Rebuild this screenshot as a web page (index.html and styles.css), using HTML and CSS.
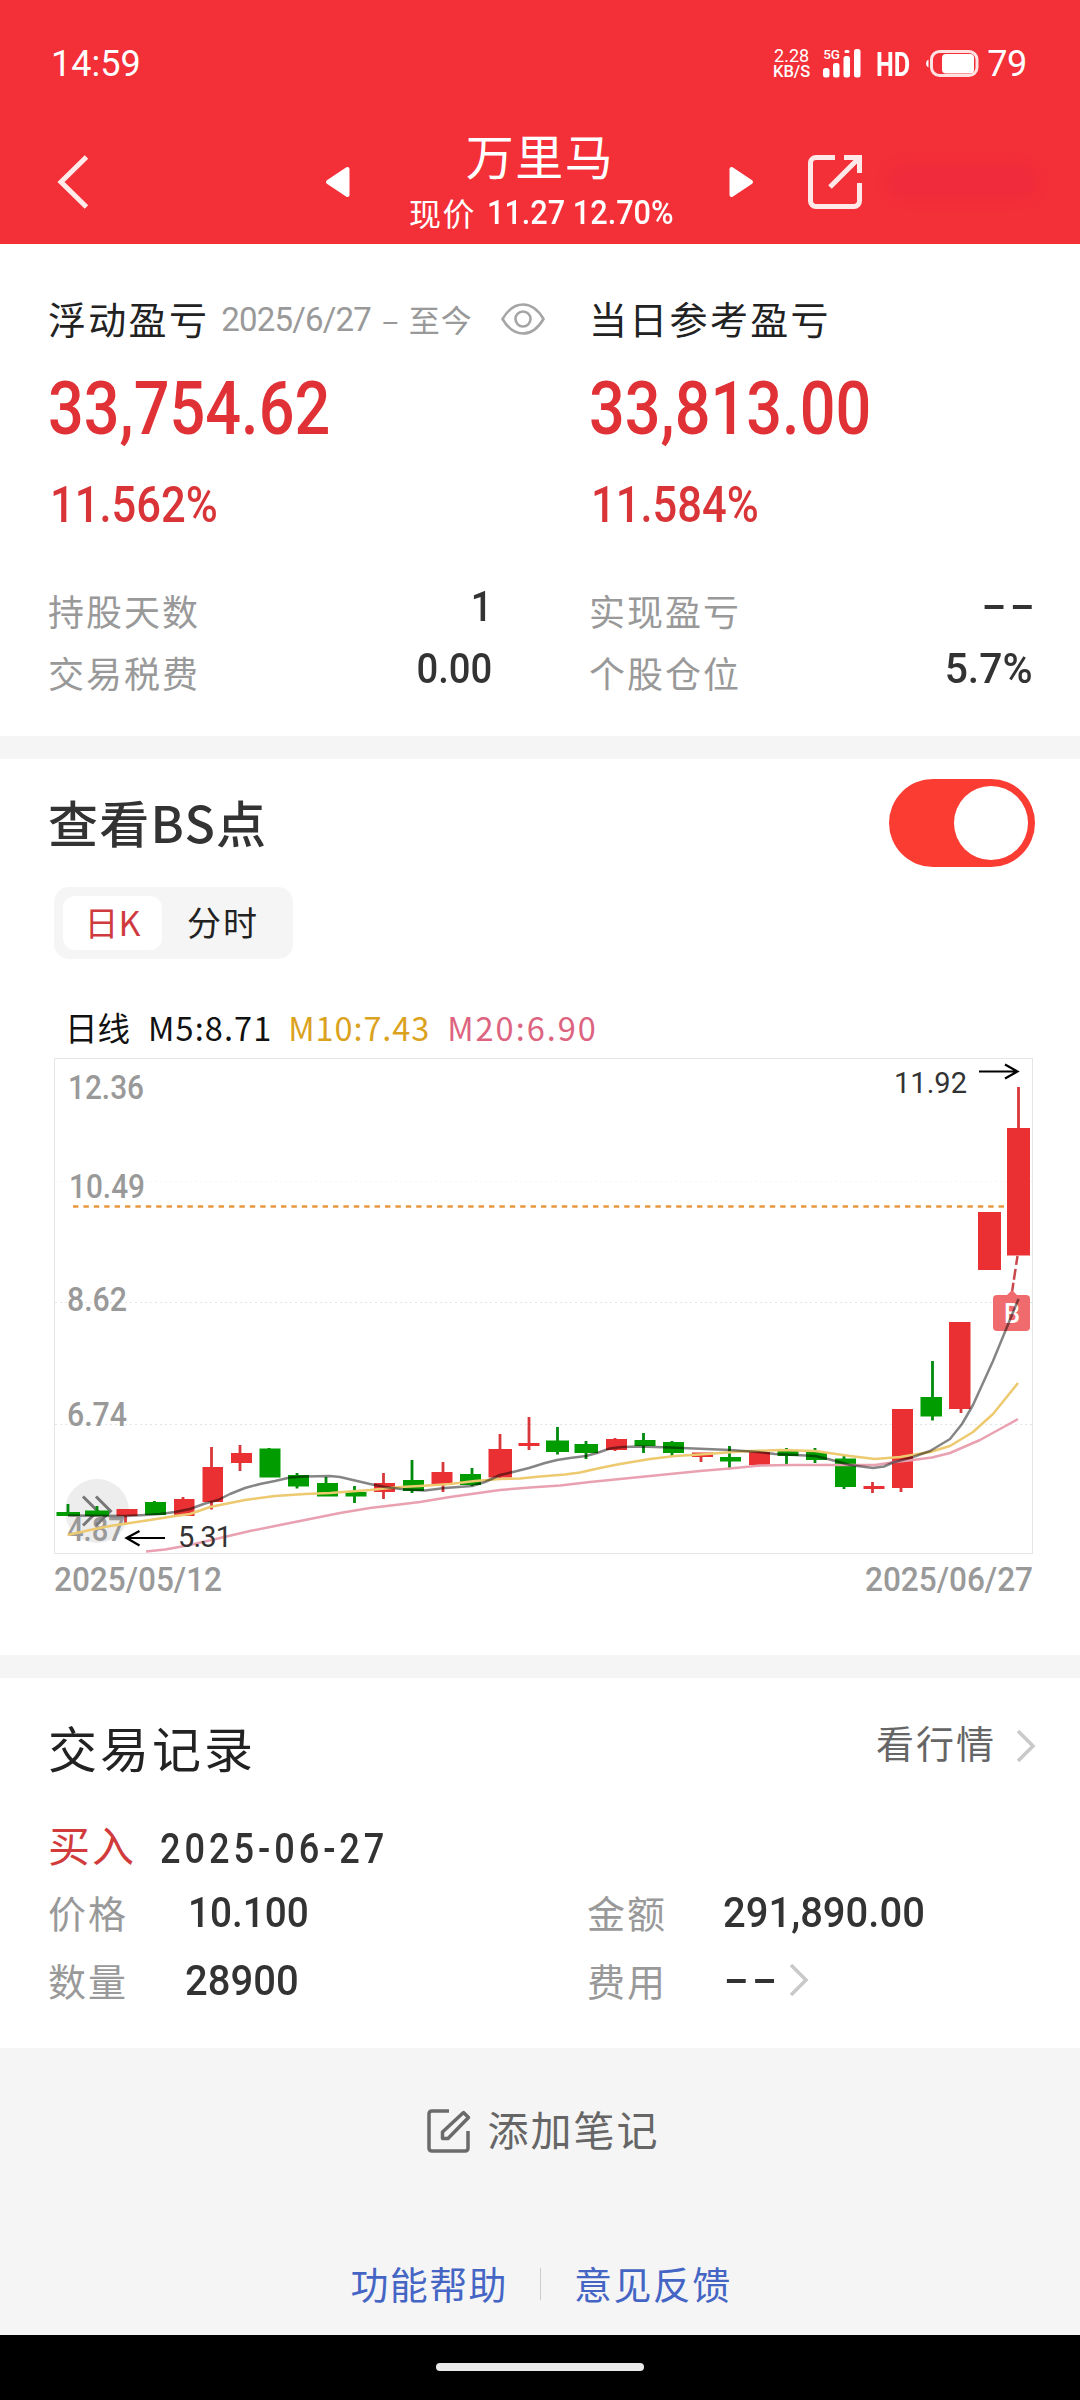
FILE: index.html
```html
<!DOCTYPE html>
<html lang="zh-CN">
<head>
<meta charset="utf-8">
<title>万里马</title>
<link rel="stylesheet" href="styles.css">
</head>
<body>
<header class="top">
  <div class="status">
    <span class="clock">14:59</span>
    <span class="speed"><span>2.28</span><span class="unit">KB/S</span></span>
    <span class="signal">
      <svg width="38" height="29" viewBox="0 0 38 29" fill="#fff"><rect y="19" width="6.5" height="9.5" rx="2.5"/><rect x="10" y="14" width="6.5" height="14.5" rx="2.5"/><rect x="20.500" y="7" width="6.500" height="21.500" rx="2.500"/><rect x="21.500" y="1" width="5" height="3" rx="1.500"/><rect x="31" width="6.500" height="28.500" rx="2.500"/></svg>
      <span class="gen">5G</span>
    </span>
    <span class="hd">HD</span>
    <svg class="battery" width="53" height="27" viewBox="0 0 53 27"><rect x="5.500" y="1.500" width="45.500" height="24" rx="8" fill="none" stroke="#ffe3e3" stroke-width="3"/><rect x="16" y="4" width="32" height="19.500" rx="4" fill="#fff"/><path d="M2.500 9.500v8Q0 16.500 0 13.500t2.500-4z" fill="#fff"/></svg>
    <span class="level">79</span>
  </div>
  <nav class="nav">
    <svg class="back" width="32" height="54" viewBox="0 0 32 54"><path d="M29.500 2 4 27l25.500 25" fill="none" stroke="#ffecea" stroke-width="5"/></svg>
    <svg class="prev" width="26" height="32" viewBox="0 0 26 32"><path d="M3 16 22.500 3v26z" fill="#fff" stroke="#fff" stroke-width="4" stroke-linejoin="round"/></svg>
    <div class="title">
      <h1>万里马</h1>
      <p><span>现价</span><span class="quote">11.27 12.70%</span></p>
    </div>
    <svg class="next" width="26" height="32" viewBox="0 0 26 32"><path d="M23 16 3.500 3v26z" fill="#fff" stroke="#fff" stroke-width="4" stroke-linejoin="round"/></svg>
    <svg class="share" width="56" height="56" viewBox="0 0 56 56" fill="none" stroke="#ffe9e8" stroke-width="5"><path d="M28 3.500H9A5.500 5.500 0 0 0 3.500 9v38A5.500 5.500 0 0 0 9 52.500h38a5.500 5.500 0 0 0 5.500-5.500V29M37 3.500h15.500V19M52 4 23 33"/></svg>
    <span class="smudge"></span>
  </nav>
</header>

<section class="summary">
  <div class="col">
    <div class="head"><span>浮动盈亏</span><span class="since">2025/6/27</span><span class="until">–</span><span class="until now">至今</span>
      <svg class="eye" width="44" height="32" viewBox="0 0 44 32" fill="none" stroke="#a5a5a5" stroke-width="2.600"><path d="M1.500 16Q10 1.500 22 1.500T42.500 16Q34 30.500 22 30.500T1.500 16z"/><circle cx="22" cy="16" r="7.500"/></svg>
    </div>
    <div class="big"><span class="din">33,754.62</span></div>
    <div class="pct"><span class="din">11.562%</span></div>
    <div class="row"><span>持股天数</span><b class="din">1</b></div>
    <div class="row"><span>交易税费</span><b class="din">0.00</b></div>
  </div>
  <div class="col right">
    <div class="head"><span>当日参考盈亏</span></div>
    <div class="big"><span class="din">33,813.00</span></div>
    <div class="pct"><span class="din">11.584%</span></div>
    <div class="row"><span>实现盈亏</span><b class="dash">--</b></div>
    <div class="row"><span>个股仓位</span><b class="din share-pct">5.7%</b></div>
  </div>
</section>

<section class="points">
  <div class="points-head"><h2>查看BS点</h2><span class="toggle"><i></i></span></div>
  <div class="tabs"><span class="tab active">日K</span><span class="tab">分时</span></div>
  <div class="legend"><span>日线</span><span class="m5">M5:8.71</span><span class="m10">M10:7.43</span><span class="m20">M20:6.90</span></div>
  <svg class="chart" width="1080" height="550" viewBox="0 1052 1080 550">
    <rect x="54.500" y="1058.500" width="978" height="495" fill="#fff" stroke="#e6e6e6"/>
    <path d="M55 1181.500H1032" stroke="#f5f5f5" stroke-dasharray="2 3"/>
    <path d="M55 1302.500H1032M55 1424.500H1032" stroke="#e4e4e4" stroke-dasharray="2 3"/>
    <path d="M73 1206.500H1008" stroke="#e8963f" stroke-width="2.500" stroke-dasharray="5.400 5"/>
    <circle cx="97" cy="1511" r="32" fill="#ededed"/>
    <g class="axis">
      <text x="68" y="1099" textLength="76" lengthAdjust="spacingAndGlyphs">12.36</text>
      <text x="69" y="1198" textLength="76" lengthAdjust="spacingAndGlyphs">10.49</text>
      <text x="67" y="1311" textLength="60" lengthAdjust="spacingAndGlyphs">8.62</text>
      <text x="67" y="1426" textLength="60" lengthAdjust="spacingAndGlyphs">6.74</text>
      <text x="67" y="1541" textLength="58" lengthAdjust="spacingAndGlyphs">4.87</text>
      <text x="54" y="1590.500" textLength="168" lengthAdjust="spacingAndGlyphs">2025/05/12</text>
      <text x="865" y="1590.500" textLength="168" lengthAdjust="spacingAndGlyphs">2025/06/27</text>
    </g>
    <g fill="none" stroke="#777" stroke-width="3"><path d="M83 1496.500 97.500 1511 83 1525.500M96 1496.500l14.500 14.500L96 1525.500"/></g>
    <g class="up">
      <path class="wick" d="M125.500 1510V1523M183 1497V1515M211.500 1447V1509.500M240 1445V1471M383.500 1473V1499M443 1462V1492M500 1434V1478M529 1417V1450M615 1438V1451M701 1453V1462M758 1450V1467M872.500 1482V1493M901 1410V1492M961 1323V1413M1018.500 1087V1254"/>
      <rect x="116.500" y="1509" width="21" height="7"/><rect x="174" y="1499" width="20.500" height="17"/><rect x="202.500" y="1467" width="20.500" height="35"/><rect x="231" y="1453" width="21" height="10"/><rect x="374" y="1483" width="21" height="9"/><rect x="431.500" y="1472" width="21" height="12.500"/><rect x="488.500" y="1449" width="23.500" height="28.500"/><rect x="518.500" y="1443" width="21" height="3"/><rect x="606" y="1439" width="21" height="11"/><rect x="692" y="1452.500" width="21" height="4.500"/><rect x="749" y="1452" width="21" height="13"/><rect x="863.500" y="1486" width="21" height="3"/><rect x="892" y="1409" width="21" height="79"/><rect x="949" y="1322" width="21.500" height="87"/><rect x="978" y="1212" width="23" height="58"/><rect x="1007" y="1128" width="23" height="127.500"/>
    </g>
    <g class="down">
      <path class="wick" d="M68 1504V1516M97 1506V1516M154.500 1501V1515M269 1448V1476M297 1473V1488.500M326 1477V1496M354.500 1486V1503M412 1460V1493M472 1468V1486M557.500 1427V1454.500M586 1441V1459M643.500 1433V1453M672 1441V1456M729.500 1446V1468M786.500 1448V1464M815 1448V1463M844 1456V1489M932.500 1361V1420.500"/>
      <rect x="56.500" y="1512" width="23.500" height="4"/><rect x="85" y="1510.500" width="24" height="5.500"/><rect x="145" y="1502" width="21" height="13"/><rect x="259.500" y="1448.500" width="21" height="29"/><rect x="288" y="1475" width="21" height="11.500"/><rect x="317" y="1483" width="21" height="13.500"/><rect x="345.500" y="1492" width="21" height="4.500"/><rect x="403" y="1480" width="21" height="11"/><rect x="460" y="1474" width="21" height="11"/><rect x="546" y="1440.500" width="23" height="11.500"/><rect x="574.500" y="1444" width="23.500" height="9"/><rect x="634.500" y="1440" width="21" height="6"/><rect x="663" y="1442" width="21" height="11"/><rect x="720" y="1457" width="21" height="4.500"/><rect x="777.500" y="1451" width="21" height="5"/><rect x="806" y="1452" width="21" height="8"/><rect x="835" y="1458.500" width="21" height="28.500"/><rect x="920.500" y="1397" width="21.500" height="19.500"/>
    </g>
    <path d="M1017.500 1256 1012 1292" stroke="#c8484c" stroke-width="2.500" stroke-dasharray="9 4 11 3"/>
    <path d="M1006 1296 1012 1290 1018 1296z" fill="#ee6a6c"/>
    <rect x="993" y="1295" width="37" height="36" rx="4" fill="#f06b6d"/>
    <text class="mark" x="1004" y="1322.500" textLength="16" lengthAdjust="spacingAndGlyphs">B</text>
    <g class="ma">
      <polyline stroke="#e9a1b1" points="146,1551.500 165,1549.500 190,1545 220,1538 250,1531 280,1525 310,1519 340,1513 370,1508 395,1505 420,1502 450,1497 500,1490 530,1487.500 560,1485.500 590,1482 640,1477 670,1474 700,1471 730,1468.500 760,1465.500 790,1465 875,1465 895,1462 913,1460 932,1457.500 950,1453 980,1440 1000,1429 1018,1419"/>
      <polyline stroke="#edc96f" points="68,1535 90,1530 110,1526 150,1520 175,1516 190,1514 210,1507 245,1500 275,1496 305,1494 330,1493 370,1490 400,1487 420,1486 450,1484 475,1481 500,1479 520,1478.500 540,1476.500 565,1474.500 580,1472.500 600,1468 620,1464 650,1459 675,1456 700,1454.500 740,1451.500 780,1450 815,1451 850,1456 875,1459 900,1457 930,1452 950,1446 973,1432 993,1414 1018,1383"/>
      <polyline stroke="#000" stroke-opacity=".48" points="68,1515.500 125,1516 145,1515 160,1514 175,1512 190,1509 205,1503.500 218,1500 230,1494 245,1488 260,1484 275,1481 290,1477.500 305,1476.500 330,1476 340,1477 355,1480.500 370,1484 385,1487 405,1489.500 425,1490.500 445,1488 472,1486 485,1482 500,1475 515,1471.500 529,1468 545,1463 557,1460 570,1458 586,1456 597,1453 610,1448.500 622,1447 640,1446.500 670,1447.500 730,1450 758,1452 775,1454 815,1456 828,1459 850,1465 873,1468 884,1466.500 893,1462.500 913,1457 930,1451 950,1439 962,1424 973,1405 993,1361 1018.500,1299"/>
    </g>
    <g class="note">
      <text x="894" y="1093" textLength="73">11.92</text>
      <text x="178" y="1547" textLength="54">5.31</text>
      <path d="M979 1071.500H1017M1005 1064.500 1017.500 1071.500 1005 1078.500M165 1538H127M139.500 1531 126.500 1538 139.500 1545.500"/>
    </g>
  </svg>
</section>

<section class="records">
  <div class="records-head"><h2>交易记录</h2><span class="more">看行情</span><svg class="chev" width="20" height="34" viewBox="0 0 20 34"><path d="M2 2 17 17 2 32"/></svg></div>
  <div class="trade"><span class="buy">买入</span><span class="din day">2025-06-27</span></div>
  <div class="grid">
    <span>价格</span><b class="din price">10.100</b><span>金额</span><b class="din amount">291,890.00</b>
    <span>数量</span><b class="din">28900</b><span>费用</span><div class="fee"><b class="dash">--</b><svg class="chev" width="20" height="34" viewBox="0 0 20 34"><path d="M2 2 17 17 2 32"/></svg></div>
  </div>
</section>

<footer>
  <div class="memo"><svg width="44" height="44" viewBox="0 0 44 44" fill="none" stroke="#6b6b6b" stroke-width="3.500"><path d="M22 2H5Q2 2 2 5V39Q2 42 5 42H38Q41 42 41 39V22" /><path d="M15.500 29.500V23L36.500 3.500 41.500 8.500 21 29.500z" stroke-linejoin="round"/></svg><span>添加笔记</span></div>
  <div class="links"><a>功能帮助</a><i></i><a>意见反馈</a></div>
</footer>
<div class="gesture"><span></span></div>
</body>
</html>
```
FILE: styles.css
```css
* { box-sizing: border-box; }
body {
  margin: 0;
  width: 1080px;
  height: 2400px;
  overflow: hidden;
  background: #f5f5f5;
  color: #222;
  font-family: "Noto Sans CJK SC", sans-serif;
}
h1, h2, p { margin: 0; font-weight: 400; }
svg { display: block; flex: none; }
span, b, a { white-space: nowrap; }

/* narrow figures */
.din {
  display: inline-block;
  font-family: Roboto, "Noto Sans CJK SC", sans-serif;
  font-weight: 500;
  transform: scaleX(.86);
  transform-origin: left;
}
.dash {
  display: inline-block;
  font-family: Roboto, sans-serif;
  font-weight: 500;
  transform: scaleX(1.700);
  transform-origin: left;
}

/* header */
.top { height: 244px; background: #f32f38; color: #fff; padding-top: 34px; }
.status {
  display: flex;
  align-items: center;
  height: 59px;
  padding: 0 53px 0 51px;
  font-family: Roboto, sans-serif;
}
.clock { font-size: 36px; margin-right: auto; }
.speed { display: flex; flex-direction: column; width: 43px; margin-right: 10px; font-size: 18px; line-height: 17px; text-align: center; }
.speed .unit { font-size: 16.500px; line-height: 16px; font-weight: 500; }
.signal { position: relative; margin-right: 15px; }
.gen { position: absolute; left: 0; top: -2px; font-size: 13.500px; line-height: 14px; font-weight: 500; }
.hd { width: 34px; margin-right: 16px; font-size: 34px; font-weight: 700; transform: scaleX(.74); transform-origin: left; }
.battery { margin-right: 8px; }
.level { font-size: 36px; letter-spacing: -.3px; }
.nav { display: flex; align-items: center; height: 151px; padding: 27px 34px 0 57px; }
.back { margin-right: 236px; }
.title { width: 377px; margin-top: -3px; text-align: center; }
.title h1 { font-size: 48px; line-height: 58px; letter-spacing: 1.500px; padding-left: 1px; }
.title p { display: flex; align-items: center; padding-left: 58px; font-size: 32px; line-height: 46px; letter-spacing: 1.500px; margin-top: 5px; }
.quote { font-family: Roboto, sans-serif; font-size: 33.500px; font-weight: 500; letter-spacing: 0; margin-left: 11px; padding-top: 2px; transform: scaleX(.915); transform-origin: left; }
.next { margin-right: 53px; }
.smudge { width: 150px; height: 34px; margin-left: 24px; border-radius: 17px; background: #ea2343; opacity: .32; filter: blur(7px); }

/* profit summary */
.summary { display: grid; grid-template-columns: 541px 491px; height: 492px; padding: 43px 0 0 48px; background: #fff; }
.col { padding-right: 97px; }
.right { padding-right: 48px; }
.head { display: flex; align-items: center; height: 60px; font-size: 38px; letter-spacing: 2.300px; margin-right: -60px; }
.since { font-family: Roboto, sans-serif; font-size: 33px; color: #999; letter-spacing: -.8px; margin-left: 12px; padding-top: 4px; }
.until { font-size: 31px; letter-spacing: 1px; color: #999; margin-left: 11px; padding-top: 3px; }
.now { margin-left: 9px; }
.eye { margin: 3px 0 0 28px; }
.big { height: 80px; margin-top: 15px; font-size: 75px; line-height: 80px; color: #e03236; }
.pct { height: 60px; margin: 28px 0 49px; padding-left: 2px; font-size: 50px; line-height: 60px; color: #d93438; }
.big .din { transform: scaleX(.84); }
.pct .din { transform: scaleX(.87); }
.row { display: flex; justify-content: space-between; align-items: center; height: 62px; font-size: 36px; letter-spacing: 2px; color: #999; }
.row b { font-size: 43px; letter-spacing: 0; color: #333; padding-bottom: 8px; transform-origin: right; }
.row .din { transform: scaleX(.89); }
.row .share-pct { transform: scaleX(.95); }
.row .dash { letter-spacing: 2px; margin-right: -6px; padding-bottom: 10px; }

/* buy/sell chart */
.points { height: 896px; margin-top: 23px; background: #fff; }
.points-head { display: flex; justify-content: space-between; align-items: center; padding: 20px 45px 0 48px; height: 108px; }
.points-head h2 { font-size: 50px; font-weight: 500; color: #333; letter-spacing: 1.300px; line-height: 60px; padding-bottom: 5px; }
.toggle { display: flex; justify-content: flex-end; width: 146px; height: 88px; padding: 7px; border-radius: 44px; background: #fa3c32; }
.toggle i { width: 74px; height: 74px; border-radius: 50%; background: #fff; }
.tabs { display: inline-flex; margin: 20px 0 0 54px; height: 72px; width: 239px; padding: 9px; border-radius: 15px; background: #f5f5f5; vertical-align: top; }
.tab { display: flex; align-items: center; justify-content: center; width: 99px; font-size: 34px; padding-bottom: 3px; }
.tab + .tab { width: 122px; letter-spacing: 2px; }
.active { background: #fff; border-radius: 12px; color: #cf3a3e; letter-spacing: 0; }
.legend { display: flex; align-items: center; height: 50px; margin: 42px 0 1px 65px; font-size: 32.500px; color: #111; }
.legend .m5 { margin-left: 18px; letter-spacing: 1.100px; }
.legend .m10 { margin-left: 16px; color: #dba21d; letter-spacing: .900px; }
.legend .m20 { margin-left: 17px; color: #dd6480; letter-spacing: 2px; }
.chart { font-family: Roboto, sans-serif; }
.axis { font-size: 33px; font-weight: 500; fill: #999; }
.up { fill: #ea3032; }
.up .wick { stroke: #d8383b; }
.down { fill: #009c00; }
.down .wick { stroke: #008a0c; }
.wick { stroke-width: 2.800; fill: none; }
.ma { fill: none; stroke-width: 2.500; stroke-linejoin: round; }
.note { font-size: 29px; fill: #333; }
.note path { stroke: #000; stroke-width: 2.200; fill: none; }
.mark { font-size: 27px; font-weight: 500; fill: #fff; }

/* trade records */
.records { height: 370px; margin-top: 23px; padding: 36px 0 0 48px; background: #fff; }
.records-head { display: flex; align-items: center; height: 64px; }
.records-head h2 { font-size: 49px; line-height: 64px; letter-spacing: 3px; margin-right: auto; padding-top: 2px; }
.more { font-size: 38px; letter-spacing: 2px; color: #666; padding-bottom: 9px; }
.records-head .chev { margin: 0 44px 0 20px; }
.chev { fill: none; stroke: #c9c9c9; stroke-width: 3.500; }
.trade { display: flex; align-items: center; height: 60px; margin-top: 38px; font-size: 42px; letter-spacing: 2px; }
.buy { width: 112px; color: #d23b3c; margin-top: -6px; }
.day { font-size: 42px; letter-spacing: 4.600px; color: #333; padding-top: 4px; }
.grid { display: grid; grid-template-columns: 137px 402px 136px 1fr; grid-template-rows: 60px 60px; row-gap: 8px; align-items: center; margin-top: 6px; font-size: 38px; letter-spacing: 2px; color: #999; }
.grid span { padding-bottom: 2px; }
.grid b { font-size: 43px; letter-spacing: 0; color: #333; }
.grid .din { transform: scaleX(.93); justify-self: start; }
.grid .price { transform: scaleX(.9); margin-left: 3px; }
.fee { display: flex; align-items: center; }
.grid .dash { letter-spacing: 2px; margin-left: 1px; padding-bottom: 3px; }
.fee .chev { margin: 0 0 0 32px; }

/* footer */
footer { display: flex; flex-direction: column; align-items: center; height: 287px; background: #f5f5f5; padding-top: 50px; }
.memo { display: flex; align-items: center; height: 66px; font-size: 41px; letter-spacing: 2px; color: #666; padding-left: 6px; }
.memo span { margin-left: 17px; padding-bottom: 6px; }
.links { display: flex; align-items: center; height: 60px; margin-top: 90px; padding-left: 2px; font-size: 38px; letter-spacing: 1.400px; color: #4565c5; }
.links a { padding-bottom: 4px; }
.links i { width: 1px; height: 32px; background: #ccc; margin: 0 33px 0 32px; }
.gesture { display: flex; justify-content: center; height: 65px; padding-top: 28px; background: #000; }
.gesture span { width: 208px; height: 8px; border-radius: 4px; background: #ebebeb; }
```
